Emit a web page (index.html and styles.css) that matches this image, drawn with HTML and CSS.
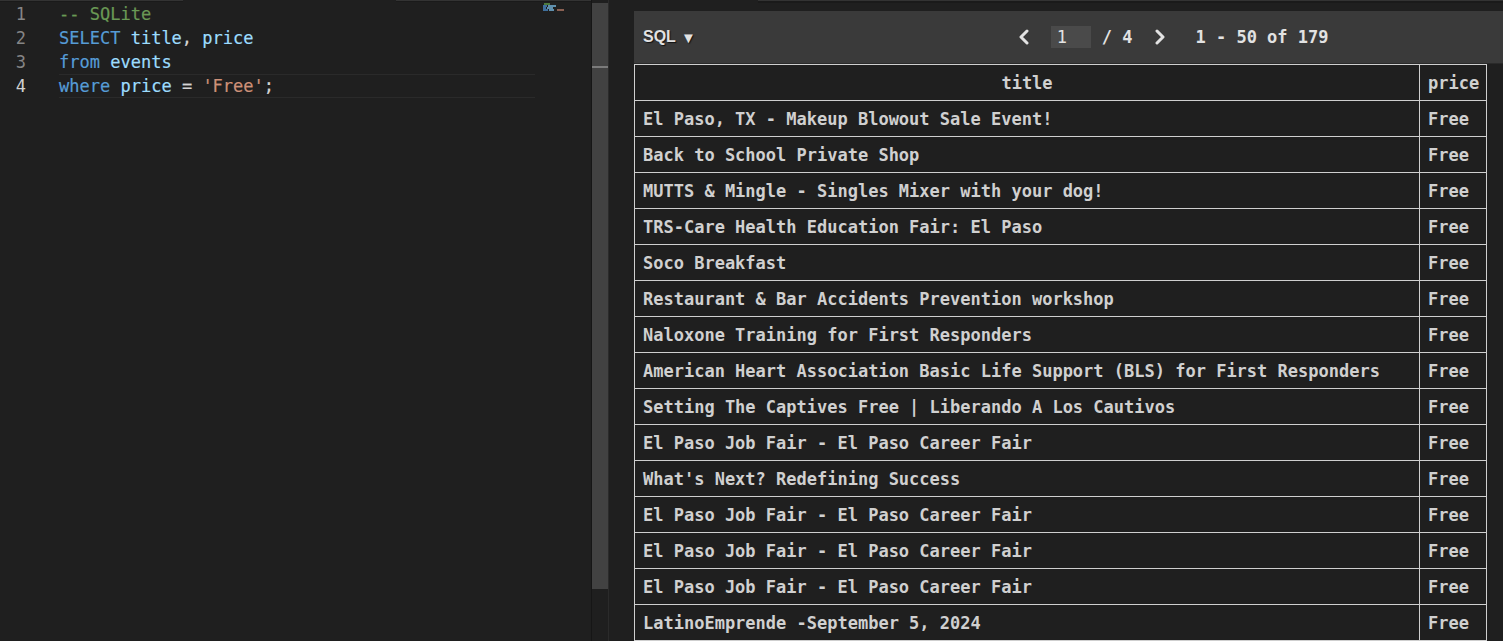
FILE: index.html
```html
<!DOCTYPE html>
<html>
<head>
<meta charset="utf-8">
<link rel="stylesheet" href="styles.css">
</head>
<body>
<div class="app">
  <div class="editor">
    <div class="editor-main">
      <div class="top-edge"><span class="seg seg-a"></span><span class="seg seg-gap"></span><span class="seg seg-b"></span></div>
      <div class="code-area">
        <div class="gutter">
          <div class="ln">1</div>
          <div class="ln">2</div>
          <div class="ln">3</div>
          <div class="ln ln-active">4</div>
        </div>
        <div class="code">
          <div class="line"><span class="tk-com">-- SQLite</span></div>
          <div class="line"><span class="tk-kw">SELECT</span> <span class="tk-id">title</span><span class="tk-p">,</span> <span class="tk-id">price</span></div>
          <div class="line"><span class="tk-kw">from</span> <span class="tk-id">events</span></div>
          <div class="line line-active"><span class="tk-kw">where</span> <span class="tk-id">price</span> <span class="tk-p">=</span> <span class="tk-str">'Free'</span><span class="tk-p">;</span></div>
        </div>
      </div>
      <svg class="minimap" width="22" height="10" viewBox="0 0 22 10">
        <rect x="1" y="0" width="6" height="2" fill="#4d7a3e"/>
        <rect x="0" y="2" width="4" height="2" fill="#3f6f9c"/>
        <rect x="5" y="2" width="8" height="2" fill="#5f8fad"/>
        <rect x="0" y="4" width="3" height="2" fill="#3f6f9c"/>
        <rect x="4" y="4" width="6" height="2" fill="#5f8fad"/>
        <rect x="0" y="6" width="5" height="2" fill="#3f6f9c"/>
        <rect x="6" y="6" width="5" height="2" fill="#5f8fad"/>
        <rect x="14" y="6" width="7" height="2" fill="#8a6052"/>
      </svg>
    </div>
    <div class="scrollbar">
      <div class="sb-top"></div>
      <div class="sb-thumb"><div class="sb-mark"></div></div>
      <div class="sb-rest"></div>
    </div>
  </div>

  <div class="results">
    <div class="results-top"></div>
    <div class="toolbar">
      <div class="lang">SQL <span class="caret">▼</span></div>
      <div class="pager">
        <svg class="chev" width="12" height="16" viewBox="0 0 12 16"><polyline points="9,2 3,8 9,14" fill="none" stroke="#e2e2e2" stroke-width="3" stroke-linecap="round" stroke-linejoin="round"/></svg>
        <div class="page-input">1</div>
        <span class="page-total">/ 4</span>
        <svg class="chev chev-next" width="12" height="16" viewBox="0 0 12 16"><polyline points="3,2 9,8 3,14" fill="none" stroke="#e2e2e2" stroke-width="3" stroke-linecap="round" stroke-linejoin="round"/></svg>
        <span class="range">1 - 50 of 179</span>
      </div>
    </div>
    <div class="toolbar-sep"></div>
    <table class="grid">
      <colgroup><col class="c-title"><col class="c-price"></colgroup>
      <thead>
        <tr><th class="th-title">title</th><th>price</th></tr>
      </thead>
      <tbody>
        <tr><td>El Paso, TX - Makeup Blowout Sale Event!</td><td>Free</td></tr>
        <tr><td>Back to School Private Shop</td><td>Free</td></tr>
        <tr><td>MUTTS &amp; Mingle - Singles Mixer with your dog!</td><td>Free</td></tr>
        <tr><td>TRS-Care Health Education Fair: El Paso</td><td>Free</td></tr>
        <tr><td>Soco Breakfast</td><td>Free</td></tr>
        <tr><td>Restaurant &amp; Bar Accidents Prevention workshop</td><td>Free</td></tr>
        <tr><td>Naloxone Training for First Responders</td><td>Free</td></tr>
        <tr><td>American Heart Association Basic Life Support (BLS) for First Responders</td><td>Free</td></tr>
        <tr><td>Setting The Captives Free | Liberando A Los Cautivos</td><td>Free</td></tr>
        <tr><td>El Paso Job Fair - El Paso Career Fair</td><td>Free</td></tr>
        <tr><td>What's Next? Redefining Success</td><td>Free</td></tr>
        <tr><td>El Paso Job Fair - El Paso Career Fair</td><td>Free</td></tr>
        <tr><td>El Paso Job Fair - El Paso Career Fair</td><td>Free</td></tr>
        <tr><td>El Paso Job Fair - El Paso Career Fair</td><td>Free</td></tr>
        <tr><td>LatinoEmprende -September 5, 2024</td><td>Free</td></tr>
      </tbody>
    </table>
  </div>
</div>
</body>
</html>
```

FILE: styles.css
```css
html, body {
  margin: 0;
  padding: 0;
  background: #1f1f1f;
  height: 641px;
  overflow: hidden;
}

.app {
  display: flex;
  width: 1503px;
  height: 641px;
}

/* ---------- editor ---------- */
.editor {
  display: flex;
  width: 609px;
  height: 641px;
  flex: none;
}

.editor-main {
  position: relative;
  width: 591px;
  height: 641px;
  background: #1f1f1f;
}

.top-edge {
  display: flex;
  height: 2px;
}
.seg { display: block; height: 1px; border-bottom: 1px solid #1a1a1a; }
.seg-a { width: 183px; background: #333333; }
.seg-gap { width: 213px; background: #1f1f1f; border-bottom-color: #1f1f1f; }
.seg-b { flex: 1; background: #333333; }

.code-area {
  display: flex;
  font-family: "DejaVu Sans Mono", "Liberation Mono", monospace;
  font-size: 17px;
  line-height: 24px;
}

.gutter {
  width: 26px;
  text-align: right;
  color: #858585;
}
.ln { height: 24px; }
.ln-active { color: #d0d0d0; }

.code {
  margin-left: 33px;
  color: #d4d4d4;
}

.line {
  height: 24px;
  white-space: pre;
  -webkit-text-stroke: 0.2px currentColor;
}
.line-active {
  box-sizing: border-box;
  width: 476px;
  border-top: 1px solid #2a2a2a;
  border-bottom: 1px solid #2a2a2a;
  line-height: 22px;
}

.tk-com { color: #6a9955; }
.tk-kw { color: #569cd6; }
.tk-id { color: #9cdcfe; }
.tk-str { color: #ce9178; }
.tk-p { color: #d4d4d4; }

.minimap {
  position: absolute;
  left: 543px;
  top: 3px;
  display: block;
}

.scrollbar {
  width: 18px;
  display: flex;
  flex-direction: column;
  box-sizing: border-box;
  border-left: 1px solid #161616;
  border-right: 1px solid #2b2b2b;
}
.sb-top { height: 3px; background: #1f1f1f; }
.sb-thumb {
  height: 586px;
  background: #424242;
  padding-top: 63px;
  box-sizing: border-box;
}
.sb-mark { height: 2px; background: #7b7b7b; }
.sb-rest { flex: 1; background: #1f1f1f; }

/* ---------- results ---------- */
.results {
  margin-left: 25px;
  width: 869px;
  flex: none;
  display: flex;
  flex-direction: column;
}

.results-top {
  height: 11px;
  box-sizing: border-box;
  margin-left: 124px;
  border-top: 1px solid #333333;
  background: linear-gradient(#1a1a1a 0, #1a1a1a 2px, #1f1f1f 2px);
}

.toolbar {
  height: 52px;
  background: #3a3a3a;
  display: flex;
  align-items: center;
  padding-left: 9px;
  color: #e2e2e2;
}

.lang {
  font-family: "Liberation Sans", Arial, sans-serif;
  font-weight: bold;
  font-size: 16px;
  text-shadow: 1px 1px 1px #111111;
  display: flex;
  align-items: center;
  gap: 5px;
}
.caret { font-size: 15px; }

.pager {
  margin-left: 322px;
  display: flex;
  align-items: center;
  font-family: "DejaVu Sans Mono", "Liberation Mono", monospace;
  font-size: 17px;
  font-weight: bold;
}

.chev { display: block; }

.page-input {
  margin-left: 21px;
  width: 40px;
  height: 22px;
  box-sizing: border-box;
  padding-left: 6px;
  background: #4a4a4a;
  font-weight: normal;
  line-height: 22px;
}

.page-total { margin-left: 11px; }
.chev-next { margin-left: 22px; }
.range { margin-left: 29px; }

.toolbar-sep {
  height: 1px;
  background: #2a2a2a;
}

.grid {
  table-layout: fixed;
  width: 853px;
  border-collapse: separate;
  border-spacing: 0;
  border-top: 1px solid #cfcfcf;
  border-left: 1px solid #cfcfcf;
  font-family: "DejaVu Sans Mono", "Liberation Mono", monospace;
  font-size: 17px;
  font-weight: bold;
  color: #d0d0d0;
  background: #1f1f1f;
}

.c-title { width: 785px; }
.c-price { width: 67px; }

.grid th,
.grid td {
  box-sizing: border-box;
  height: 36px;
  padding: 0 8px;
  border-right: 1px solid #cfcfcf;
  border-bottom: 1px solid #cfcfcf;
  white-space: nowrap;
  overflow: hidden;
  text-align: left;
  font-weight: bold;
}

.grid th.th-title { text-align: center; }
```
